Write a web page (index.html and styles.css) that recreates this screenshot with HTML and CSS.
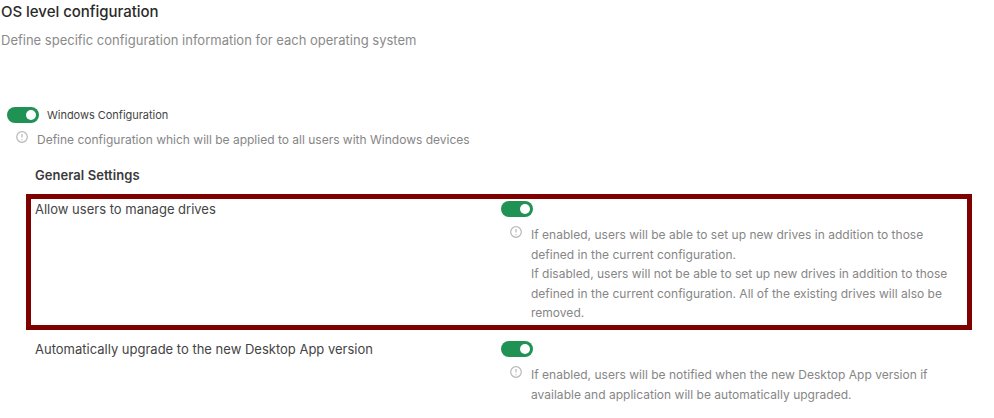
FILE: index.html
```html
<!DOCTYPE html>
<html lang="en">
<head>
<meta charset="utf-8">
<title>OS level configuration</title>
<link rel="stylesheet" href="styles.css">
</head>
<body>
<main class="page">
  <h1 class="title">OS level configuration</h1>
  <p class="subtitle">Define specific configuration information for each operating system</p>

  <div class="os-head">
    <span class="toggle"></span>
    <span class="os-label">Windows Configuration</span>
  </div>
  <div class="hint os-hint">
    <svg class="info" viewBox="0 0 12 12"><circle cx="6" cy="6" r="5.3"/><path d="M6 3v3.6M6 8.2v1"/></svg>
    <p>Define configuration which will be applied to all users with Windows devices</p>
  </div>

  <h2 class="section">General Settings</h2>

  <div class="setting highlighted">
    <div class="setting-name">Allow users to manage drives</div>
    <div class="setting-body">
      <span class="toggle"></span>
      <div class="hint">
        <svg class="info" viewBox="0 0 12 12"><circle cx="6" cy="6" r="5.3"/><path d="M6 3v3.6M6 8.2v1"/></svg>
        <p>If enabled, users will be able to set up new drives in addition to those defined in the current configuration.<br>If disabled, users will not be able to set up new drives in addition to those defined in the current configuration. All of the existing drives will also be removed.</p>
      </div>
    </div>
  </div>

  <div class="setting">
    <div class="setting-name">Automatically upgrade to the new Desktop App version</div>
    <div class="setting-body">
      <span class="toggle"></span>
      <div class="hint">
        <svg class="info" viewBox="0 0 12 12"><circle cx="6" cy="6" r="5.3"/><path d="M6 3v3.6M6 8.2v1"/></svg>
        <p>If enabled, users will be notified when the new Desktop App version if available and application will be automatically upgraded.</p>
      </div>
    </div>
  </div>
</main>
</body>
</html>
```

FILE: styles.css
```css
* { box-sizing: border-box; }
html, body { margin: 0; padding: 0; background: #fff; overflow: hidden; }
body { font-family: Inter, "Liberation Sans", sans-serif; width: 994px; height: 418px; }
.page { padding: 0 0 0 1px; }
p { margin: 0; }
.title { margin: 0; padding-top: 2px; font-size: 15px; line-height: 20px; font-weight: 500; color: #2a2a2a; letter-spacing: -0.03px; }
.subtitle { margin-top: 8px; font-size: 13px; line-height: 20px; color: #8a8a8a; }
.os-head { display: flex; align-items: center; gap: 8px; margin: 56px 0 0 6px; height: 18px; }
.os-label { font-size: 11px; color: #444; letter-spacing: -0.03px; }
.toggle { position: relative; display: block; width: 32px; height: 16px; border-radius: 8px; background: #1f9254; flex: none; }
.toggle::after { content: ""; position: absolute; right: 3px; top: 3px; width: 10px; height: 10px; border-radius: 50%; background: #fff; }
.hint { display: flex; align-items: flex-start; color: #868686; font-size: 12px; line-height: 19.5px; letter-spacing: 0.015px; }
.hint p { flex: 1; }
.info { width: 12px; height: 12px; flex: none; margin-right: 9px; margin-top: 0.5px; fill: none; stroke: #b8b8b8; stroke-width: 1.2; }
.os-hint { margin: 6px 0 0 15px; letter-spacing: 0; }
.section { margin: 15px 0 0 34px; font-size: 13px; line-height: 20px; font-weight: 600; color: #3a3a3a; letter-spacing: 0.05px; }
.setting { display: flex; margin-left: 25px; padding: 0 5px 0 9px; width: 946px; font-size: 13px; color: #444; }
.highlighted { margin-top: 9px; height: 136px; border: 5px solid #800000; padding: 0 0 0 4px; }
.setting-name { width: 466px; flex: none; line-height: 20px; padding-top: 0.5px; }
.setting-body { flex: 1; padding-top: 2px; }
.setting-body .hint { margin: 8.5px 0 0 9px; padding-right: 12px; }
.highlighted + .setting { margin-top: 9px; }
```
